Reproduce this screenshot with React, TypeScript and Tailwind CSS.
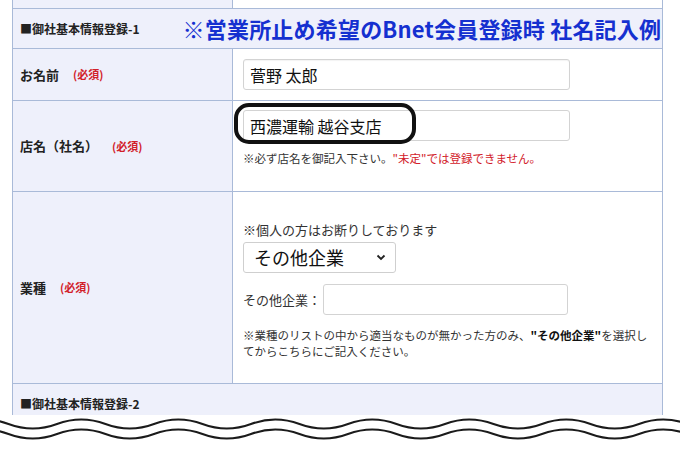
import React from "react";

const jp = { fontFamily: '"Noto Sans CJK JP", "Noto Sans", sans-serif' };

const Hissu = () => (
  <span className="ml-[14px] text-[11px] font-bold text-[#d2202a]">(必須)</span>
);

// wavy "cut" line drawn under the table
const Waves = () => {
  const wave = (y: number) => {
    const p = 97;
    let d = `M -40 ${y}`;
    d += ` Q ${-40 + p / 4} ${y - 9}, ${-40 + p / 2} ${y}`;
    for (let x = -40 + p / 2; x < 720; x += p / 2) {
      d += ` T ${x + p / 2} ${y}`;
    }
    return d;
  };
  return (
    <svg width="680" height="35" viewBox="0 0 680 35" className="block">
      <path d={wave(9)} fill="none" stroke="#1b1b1b" strokeWidth="2" />
      <path d={wave(19)} fill="none" stroke="#1b1b1b" strokeWidth="2" />
    </svg>
  );
};

export default function App() {
  return (
    <div className="w-[680px] h-[450px] bg-white overflow-hidden text-[#222]" style={jp}>
      <div className="h-[415px] overflow-hidden">
        <div className="ml-[12px] w-[651px] border-x border-[#a9bad8]">
          {/* top leftover row */}
          <div className="flex h-[9px] border-b border-[#a9bad8]">
            <div className="w-[220px] bg-[#eef0fb] border-r border-[#a9bad8]" />
            <div className="flex-1" />
          </div>

          {/* section header 1 */}
          <div className="flex items-center h-[40px] pl-[7px] bg-[#eef0fb] border-b border-[#a9bad8] whitespace-nowrap">
            <span className="text-[12px] font-bold">■御社基本情報登録-1</span>
            <span className="ml-[43px] text-[22px] font-bold text-[#1530d0] tracking-[0.2px]">
              ※営業所止め希望のBnet会員登録時 社名記入例
            </span>
          </div>

          {/* name */}
          <div className="flex h-[52px] border-b border-[#a9bad8]">
            <div className="w-[220px] flex items-center pl-[7px] bg-[#eef0fb] border-r border-[#a9bad8]">
              <span className="text-[13px] font-bold">お名前</span>
              <Hissu />
            </div>
            <div className="flex-1 flex items-center pl-[10px]">
              <div className="w-[327px] h-[31px] border border-[#d3d3d3] rounded-[3px] bg-white flex items-center px-[6px] text-[16px] text-[#111] shadow-[inset_0_1px_1px_rgba(0,0,0,0.05)]">
                菅野 太郎
              </div>
            </div>
          </div>

          {/* shop name */}
          <div className="flex h-[91px] border-b border-[#a9bad8]">
            <div className="w-[220px] flex items-center pl-[7px] bg-[#eef0fb] border-r border-[#a9bad8]">
              <span className="text-[13px] font-bold">店名（社名）</span>
              <Hissu />
            </div>
            <div className="flex-1 pl-[10px] pt-[9px] relative">
              <div className="w-[327px] h-[31px] border border-[#d3d3d3] rounded-[3px] bg-white flex items-center px-[6px] text-[16px] text-[#111]">
                西濃運輸 越谷支店
              </div>
              <div className="absolute left-[1px] top-[2px] w-[182px] h-[41px] border-[4px] border-[#111] rounded-[15px]" />
              <p className="mt-[9px] text-[11.5px] text-[#333]">
                ※必ず店名を御記入下さい。<span className="text-[#d2202a]">"未定"では登録できません。</span>
              </p>
            </div>
          </div>

          {/* business type */}
          <div className="flex h-[192px] border-b border-[#a9bad8]">
            <div className="w-[220px] flex items-center pl-[7px] bg-[#eef0fb] border-r border-[#a9bad8]">
              <span className="text-[13px] font-bold">業種</span>
              <Hissu />
            </div>
            <div className="flex-1 pl-[10px] pt-[29px]">
              <p className="text-[13px] leading-[18px] text-[#333]">※個人の方はお断りしております</p>
              <div className="mt-[3px] w-[153px] h-[31px] border border-[#cfcfcf] rounded-[3px] bg-white flex items-center justify-between pl-[10px] pr-[9px] text-[18px] text-[#111]">
                <span>その他企業</span>
                <svg width="10" height="7" viewBox="0 0 10 7">
                  <path d="M1.5 1.5 L5 5 L8.5 1.5" fill="none" stroke="#222" strokeWidth="1.8" />
                </svg>
              </div>
              <div className="mt-[11px] flex items-center">
                <span className="text-[13px] text-[#333]">その他企業：</span>
                <div className="ml-[2px] w-[245px] h-[31px] border border-[#d3d3d3] rounded-[3px] bg-white" />
              </div>
              <p className="mt-[12px] text-[11.5px] leading-[16px] text-[#333] whitespace-nowrap">
                ※業種のリストの中から適当なものが無かった方のみ、<b className="text-[#111]">"その他企業"</b>を選択し
                <br />
                てからこちらにご記入ください。
              </p>
            </div>
          </div>

          {/* section header 2 */}
          <div className="h-[40px] pl-[7px] pt-[6px] bg-[#eef0fb]">
            <span className="text-[12px] font-bold">■御社基本情報登録-2</span>
          </div>
        </div>
      </div>
      <Waves />
    </div>
  );
}
